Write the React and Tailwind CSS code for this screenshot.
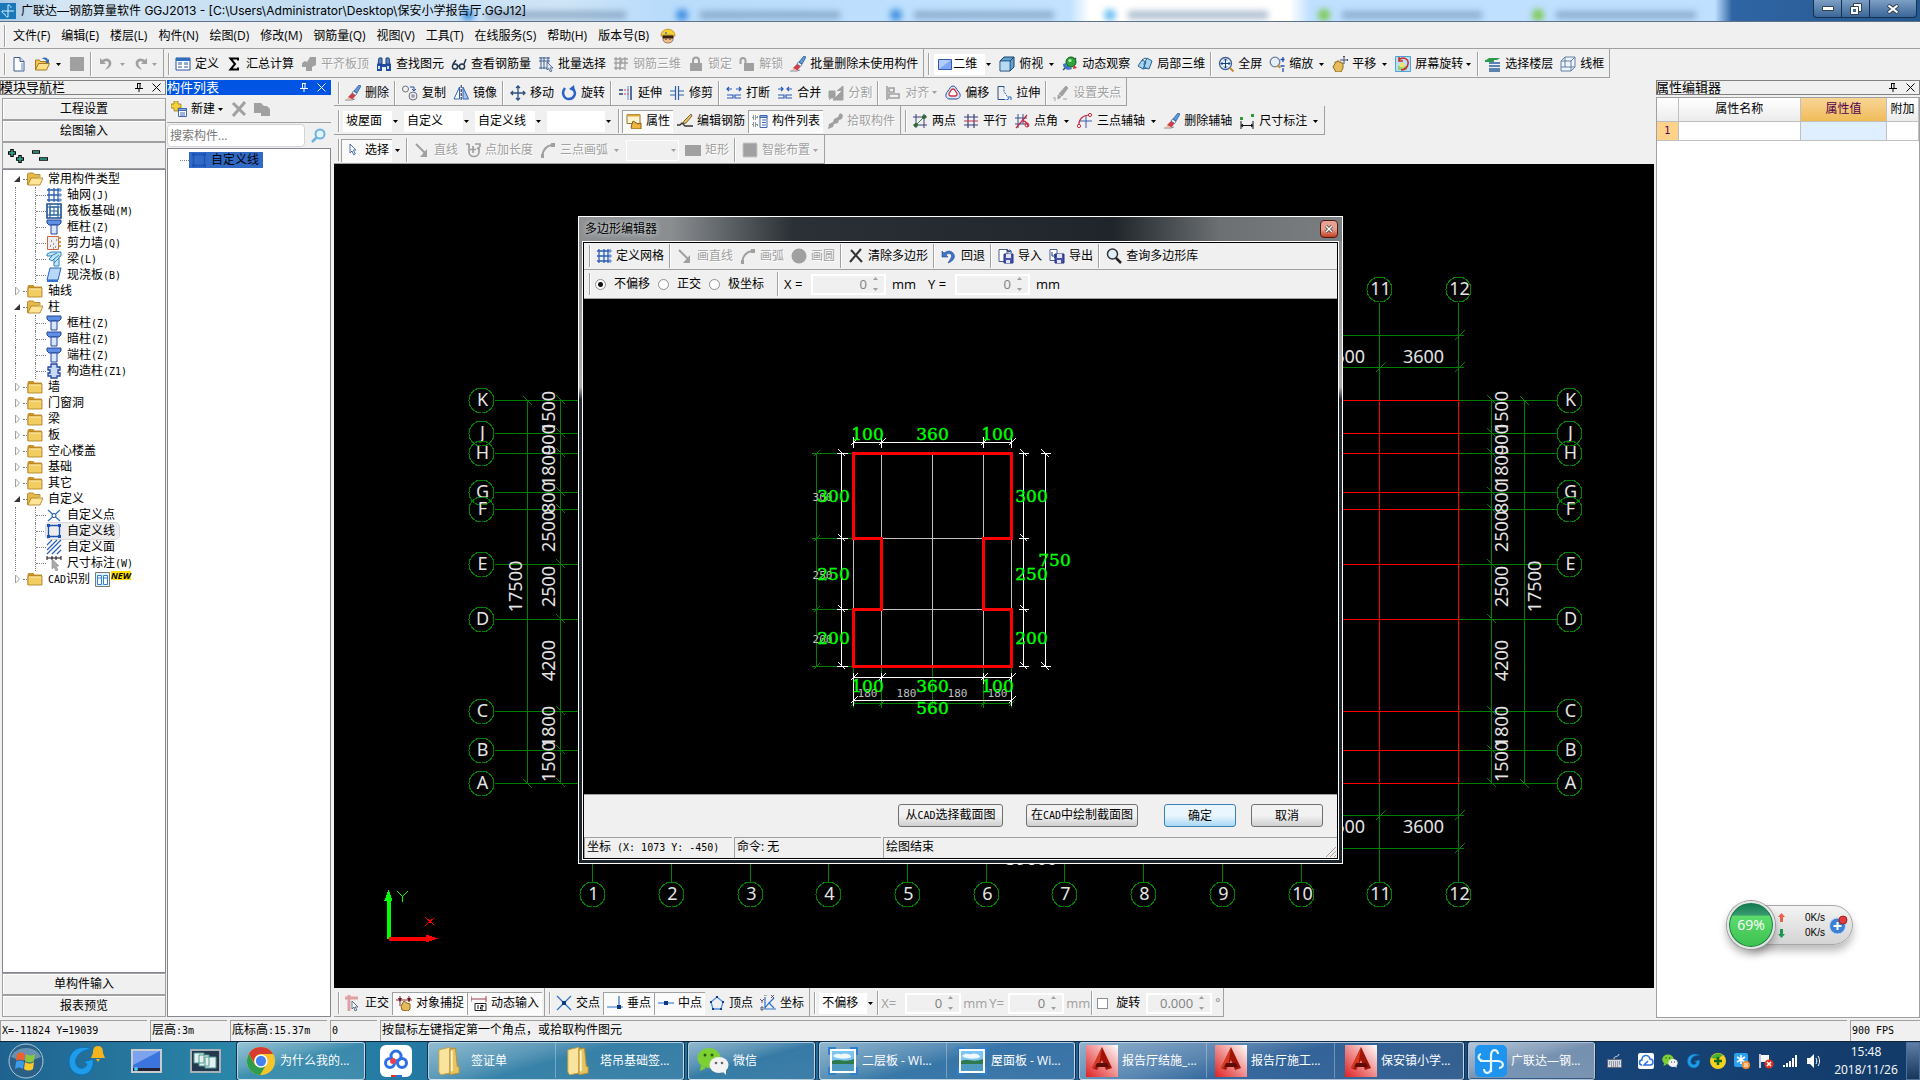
import { Fragment } from "react";

const G = "#a0a0a0";

/* 16x16 toolbar drawings */
const icons = {
  newFile: (
    <>
      <path d="M3 1.5h6l4 4v9.500H3z" fill="#fff" stroke="#3c5f94" />
      <path d="M9 1.500v4h4" fill="#c9daf2" stroke="#3c5f94" />
      <path d="M11 14V7" stroke="#a9c2e6" strokeWidth="2" />
    </>
  ),
  open: (
    <>
      <path d="M1.500 14V4h4l1 1.500h6V8" fill="#f2c65a" stroke="#a97a1c" />
      <path d="M1.500 14L4.500 7.500h11L12.500 14z" fill="#ffe08a" stroke="#a97a1c" />
      <path d="M8 3c2-2 5-2 6 1l1-1v4h-4l1.500-1.500C12 3.500 10 3 8 3z" fill="#2f6fc0" />
    </>
  ),
  save: <path d="M1 1h14v14H1z" fill={G} />,
  undoG: <path d="M2 2v6h6L6 6c3-2 6 0 4 4l-3 4c6-2 8-7 5-10C10 2 7 2 4 4z" fill={G} />,
  redoG: <path d="M14 2v6H8l2-2C7 4 4 6 6 10l3 4C3 12 1 7 4 4c2-2 5-2 8 0z" fill={G} />,
  define: (
    <>
      <path d="M1 2h14v12H1z" fill="#fff" stroke="#2a52a0" />
      <path d="M1 2h14v3H1z" fill="#2f6fc0" />
      <path d="M3 8h4M3 11h4M9 8h4M9 11h4" stroke="#2a52a0" />
      <path d="M3 6.500h4M9 6.500h4" stroke="#8fb2e6" />
    </>
  ),
  sigma: <path d="M12 4.500V2.500H4.500L9 8l-4.500 5.500H12v-2" fill="none" stroke="#000" strokeWidth="2" />,
  flatG: <path d="M1 7l3-2 2 1 3-5h6v8l-4 2v4H5v-4L1 11z" fill={G} />,
  find: (
    <>
      <path d="M1 8h5v7H1zM10 8h5v7h-5zM6 8h4v3H6z" fill="#1f4fa0" />
      <path d="M3 2h3v6H2zM10 2h3l1 6h-4z" fill="#5a86c8" stroke="#1f3f7a" />
      <path d="M2 10h2v3H2zM11 10h2v3h-2z" fill="#cfe0f8" />
    </>
  ),
  glasses: (
    <g fill="none" stroke="#223850" strokeWidth="1.500">
      <circle cx="4" cy="10.500" r="2.600" />
      <circle cx="11" cy="10.500" r="2.600" />
      <path d="M6.500 10h2M2 8l3-4M13 8l2-5" />
    </g>
  ),
  batch: (
    <>
      <path d="M1 2h11M1 5h11M3 1v12M6 1v12M1 12h8M10 1v6" stroke="#3c5f94" fill="none" />
      <path d="M9 6l6 6h-3l2 3-2 .5-1.500-3L9 14z" fill="#dce7f6" stroke="#33537f" strokeWidth=".8" />
    </>
  ),
  rebarG: <path d="M1 3h14M1 7h14M1 12h10M3 1v13M7 1v13M12 1v13M9 4l-3 9" stroke={G} strokeWidth="1.300" fill="none" />,
  lock: (
    <>
      <path d="M2 7h12v8H2z" fill={G} />
      <path d="M5 8V4.500a3 3 0 016 0V8" stroke={G} strokeWidth="2" fill="none" />
    </>
  ),
  unlock: (
    <>
      <path d="M5 7h10v8H5z" fill={G} />
      <path d="M1.500 8V4.500a2.500 2.500 0 015 0V8" stroke={G} strokeWidth="2" fill="none" />
    </>
  ),
  brush: (
    <>
      <path d="M0 15h7l3-1" stroke="#7a8ca8" fill="none" />
      <path d="M14 0l2 1-4 7-3-2z" fill="#5b9be0" stroke="#1f4f8a" strokeWidth=".7" />
      <path d="M8.500 6l3.500 2.500-1.500 2L7 8z" fill="#e6effa" stroke="#34507a" strokeWidth=".7" />
      <path d="M7 8l3.500 2.500-3 4L3 12z" fill="#c8404c" />
      <path d="M3 12l4 2.500-5 .5z" fill="#f0b090" />
    </>
  ),
  plane: (
    <>
      <path d="M1.500 3.500h13v10h-13z" fill="#7ea6f2" stroke="#3358b8" />
      <path d="M2 4h12L2 13z" fill="#b4ccfa" />
    </>
  ),
  cube: (
    <>
      <path d="M1 5l4-4h10v10l-4 4H1z" fill="#5fa2d6" stroke="#1f4060" />
      <path d="M1 5h10v10" fill="none" stroke="#1f4060" />
      <path d="M1.500 5.500h9v9h-9z" fill="#b7daf2" />
      <path d="M11 5l4-4" stroke="#1f4060" />
    </>
  ),
  orbit: (
    <>
      <path d="M1 14L14 2" stroke="#446" strokeWidth="1.500" />
      <circle cx="9" cy="6" r="5" fill="#2fa33c" stroke="#0d5c1a" />
      <circle cx="8" cy="4.500" r="1.600" fill="#b4f0b0" />
      <path d="M1 8c0 5 5 7 9 5l-1-2c-3 1-5-1-5-4z" fill="#3b76c8" />
      <path d="M12 9l3 3-4 1z" fill="#d03030" />
    </>
  ),
  part3d: (
    <>
      <path d="M1 10l4-6 4 2-3 7zM7 8l3-6 5 3-3 8-4-1z" fill="#a8d4f0" stroke="#22628e" />
      <path d="M5 4l3-2 2 1M6 13l4-1" stroke="#22628e" fill="none" />
    </>
  ),
  full: (
    <>
      <circle cx="7.500" cy="7.500" r="6" fill="#e8f2fc" stroke="#3f5f90" strokeWidth="1.300" />
      <path d="M7.500 3v9M3 7.500h9M6 4.500L7.500 3 9 4.500M6 10.500L7.500 12 9 10.500M4.500 6L3 7.500 4.500 9M10.500 6L12 7.500 10.500 9" stroke="#1a3f80" fill="none" />
      <path d="M12 12l3.500 3.500" stroke="#c98a2a" strokeWidth="2" />
    </>
  ),
  zoom: (
    <>
      <circle cx="6" cy="6" r="4.800" fill="#e4eefa" stroke="#6a7f9c" strokeWidth="1.300" />
      <path d="M9 9l2 3" stroke="#c98a2a" strokeWidth="2" />
      <path d="M14 1v5M11.500 3.500h4M11.500 10h4M14 12v4" stroke="#1a4fb0" strokeWidth="1.300" />
    </>
  ),
  pan: (
    <>
      <path d="M3 8V6h2V5h2v1h2v1h2v5l-2 4H4L1 11l1-2z" fill="#e6bd5c" stroke="#8f6a1e" />
      <path d="M12 0v8M8 4h8M11 1l1-1 1 1M15 3l1 1-1 1" stroke="#3c5070" fill="none" />
    </>
  ),
  rotScreen: (
    <>
      <path d="M.5.500h15v15H.500z" fill="#b7e0f4" stroke="#4fa2d4" />
      <path d="M3 10h9v4H3z" fill="#8fcf7c" />
      <circle cx="7" cy="9" r="2.500" fill="#f4e36a" />
      <path d="M4 4c4-4 10-1 9 4s-5 6-7 6M4 1v4h4" fill="none" stroke="#d02a2a" strokeWidth="1.500" />
    </>
  ),
  floors: (
    <>
      <path d="M4 2h11l-3 2H1z" fill="#2f9a4c" />
      <path d="M4 7h11M4 10h11M4 13h11M4 15h11" stroke="#2b5f9a" strokeWidth="1.500" />
      <path d="M0 5h9" stroke="#2f9a4c" strokeWidth="2" />
    </>
  ),
  wire: <path d="M1 5l4-4h10v10l-4 4H1zM1 5h10v10M11 5l4-4M5 1v10H1M5 11h10" fill="#eef4fa" stroke="#54749c" strokeWidth=".9" />,
  copy: (
    <>
      <circle cx="3.500" cy="4" r="3" fill="none" stroke="#6a6f78" />
      <circle cx="11" cy="11" r="4" fill="none" stroke="#6a6f78" />
      <circle cx="11" cy="11" r="2" fill="#9aa4b0" />
      <path d="M8 2h4v4M10 4l2 2 2-2" fill="none" stroke="#1f4fa0" />
    </>
  ),
  mirror: (
    <>
      <path d="M6.500 2v12H1z" fill="#fff" stroke="#2d62b8" />
      <path d="M10 2v12h5.500z" fill="#a8c4ec" stroke="#2d62b8" />
      <path d="M8.200 0v16" stroke="#223" strokeDasharray="3 1" />
    </>
  ),
  move: <path d="M8 1v14M1 8h14M6 3l2-2 2 2M6 13l2 2 2-2M3 6L1 8l2 2M13 6l2 2-2 2" stroke="#2c4f80" strokeWidth="1.300" fill="none" />,
  rotate: (
    <>
      <path d="M4 3C0 8 3 14 8 14s8-6 4-10" fill="none" stroke="#2a62c8" strokeWidth="2.500" />
      <path d="M13 0l1 7-6-3z" fill="#2a62c8" />
    </>
  ),
  extend: (
    <>
      <path d="M1 5h4M1 9h4M13 1v14" stroke="#24407c" strokeWidth="1.500" />
      <path d="M6 5h2M9 5h2M6 9h2M9 9h2" stroke="#d04050" />
      <path d="M10 1v14" stroke="#5f90d8" />
    </>
  ),
  trim: <path d="M6.500 1v14M9.500 1v14M1 6h5M10 6h5M1 10h5M10 10h5" stroke="#2d5fa8" strokeWidth="1.200" fill="none" />,
  breakI: <path d="M1 4h5M10 4h5M3 2L1 4l2 2M13 2l2 2-2 2M1 10h6v3H1M15 10H9v3h6" fill="none" stroke="#2758b8" strokeWidth="1.200" />,
  merge: <path d="M1 4h5M10 4h5M4 2l2 2-2 2M12 2l-2 2 2 2M1 10h6v3H1M15 10H9v3h6" fill="none" stroke="#2758b8" strokeWidth="1.200" />,
  splitG: <path d="M1 6h6v7H1zM9 6l6-5v14H5l9-9M3 13l-2 2" fill={G} stroke={G} />,
  alignG: <path d="M2 1v14M4 3h5v4H4zM4 9h10v4H4z" fill="none" stroke={G} strokeWidth="1.600" />,
  offset: (
    <>
      <path d="M8 1c3 0 3 3 5 5 4 4 2 8-2 8H5C1 14-1 10 3 6c2-2 2-5 5-5z" fill="#d8e6fa" stroke="#2b4f90" />
      <path d="M8 4c2 0 2 2 3 3 2 2 1 4-1 4H6c-2 0-3-2-1-4 1-1 1-3 3-3z" fill="#fff" stroke="#d0303c" strokeWidth="1.300" />
    </>
  ),
  stretch: (
    <>
      <path d="M8 1.500H2v13h6" fill="none" stroke="#2d4f80" />
      <path d="M8 1.500v5l5 8H8" fill="#fff" stroke="#1f62c0" strokeDasharray="2 1" />
      <path d="M12 12h3v3" stroke="#1f62c0" fill="none" />
    </>
  ),
  gripG: <path d="M13 1l2 2-6 8-3-2zM5 10l3 2-3 2zM0 13h3M10 14h4M1 15h2" fill={G} stroke={G} />,
  props: (
    <>
      <path d="M1 1.500h13v9H1z" fill="#fff4d0" stroke="#8a7430" />
      <path d="M1 1.500h13v2H1z" fill="#e0a83c" />
      <path d="M5 14l2-6 5 3 3-1v6H6z" fill="#f0b440" stroke="#8a6214" />
    </>
  ),
  editRebar: (
    <>
      <path d="M0 12h3l2-2 3 3h8" fill="none" stroke="#333" strokeWidth="1.300" />
      <path d="M14 1l1 2-6 7-3 1 1-3z" fill="#e8c060" stroke="#5f4a1a" strokeWidth=".8" />
    </>
  ),
  compList: (
    <>
      <path d="M8 2.500h7v12H8z" fill="#fff" stroke="#4068b0" />
      <path d="M8 2.500h7v2H8zM10 7h4M10 9.500h4M10 12h4" fill="#88aae0" stroke="#4068b0" />
      <path d="M1 3h3v3H1zM1 10h3v3H1zM5 4h2M5 12h2" fill="none" stroke="#234" strokeDasharray="1 1" />
    </>
  ),
  pickG: <path d="M13 0l3 2-1 4-3 1-1 3-4 1-1 3-5 2 1-5 4-2 1-3 4-2z" fill={G} />,
  twoPt: (
    <>
      <path d="M1 4h14M1 12h14M4 1v14M12 1v14" stroke="#3a3f78" fill="none" />
      <path d="M2 14L14 2" stroke="#2b8a3a" />
      <circle cx="12" cy="4" r="2" fill="#2b6a2a" />
      <circle cx="4" cy="12" r="2" fill="#2b6a2a" />
    </>
  ),
  parallel: (
    <>
      <path d="M1 4h14M1 12h14M5 1v14M11 1v14" stroke="#3a3f78" fill="none" strokeWidth="1.200" />
      <path d="M1 8h14" stroke="#c03048" />
    </>
  ),
  ptAngle: (
    <>
      <path d="M1 5h12M1 11h12M4 1v14M9 1v10" stroke="#3a4f90" fill="none" />
      <path d="M2 15L13 2M9 8c3 0 5 3 5 6" stroke="#c8283c" fill="none" strokeWidth="1.300" />
      <circle cx="13" cy="12" r="2" fill="none" stroke="#c8283c" />
    </>
  ),
  threePt: (
    <>
      <path d="M2 8h13M9 3v12" stroke="#3a5fb0" />
      <path d="M2 14C1 6 6 2 13 2" stroke="#c8283c" fill="none" strokeWidth="1.200" />
      <circle cx="13" cy="2" r="1.600" fill="#fff" stroke="#c8283c" />
      <circle cx="2" cy="13" r="1.600" fill="#fff" stroke="#c8283c" />
    </>
  ),
  dim: (
    <>
      <path d="M2 8v8M14 8v8M2 12.500h12M4 11l-2 1.500L4 14M12 11l2 1.500-2 1.500" stroke="#111" fill="none" />
      <path d="M1 4h3v3H1zM12 1h3v3h-3z" fill="#2f9a3c" />
    </>
  ),
  cursor: <path d="M5 2l6 6H8.500l1.800 4-1.600.8L7 9l-2 2z" fill="#fff" stroke="#4a6ea8" />,
  lineG: (
    <>
      <path d="M2 2l9 9" stroke={G} strokeWidth="2" />
      <path d="M13 7v8H6z" fill={G} />
    </>
  ),
  lenG: <path d="M4 2H1M4 2v8c0 6 10 6 10 0V5M14 5l-2 2M8 4v7M5 7.500h6M10 2h5v3" fill="none" stroke={G} strokeWidth="1.700" />,
  arcG: (
    <>
      <path d="M2 14C3 8 6 4 12 3" fill="none" stroke={G} strokeWidth="2" />
      <path d="M11 1h4v4h-4zM1 12h3v4H1z" fill={G} />
    </>
  ),
  rectG: <path d="M0 3h16v11H0z" fill={G} />,
  smartG: <path d="M1.500 1.500h13v13h-13z" fill={G} stroke={G} strokeWidth="2" strokeDasharray="1 1" />,
  ortho: (
    <>
      <path d="M0 3h13M4 0v16" stroke="#e0a0a0" strokeWidth="3" />
      <path d="M7 6l6 6h-3l2 3-2 1-1-4-2 2z" fill="#fff" stroke="#46658c" strokeWidth=".9" />
    </>
  ),
  snap: (
    <>
      <path d="M0 5h16M4 1v10M13 1v6" stroke="#a0202c" />
      <path d="M2 3l2 4 2-4zM11 3l2 4 2-4z" fill="#601820" />
      <path d="M6 15l-1-4 3-5 3 2 3 1v5l-2 2z" fill="#e4bb58" stroke="#8a681c" />
    </>
  ),
  dyn: (
    <>
      <path d="M0 4h15M0 1v6M15 1v6" stroke="#a04050" />
      <path d="M4 8.500h11v7H4z" fill="#fff" stroke="#222" />
      <path d="M7 10v4M9.500 10.500H12V12H9.500v2H12" stroke="#111" fill="none" />
    </>
  ),
  cross: (
    <>
      <path d="M1 1l14 14M15 1L1 15" stroke="#2b70c8" strokeWidth="1.200" />
      <path d="M6 6h4v4H6z" fill="#123a80" />
    </>
  ),
  perp: (
    <>
      <path d="M0 12h16M12 1v11" stroke="#2b70c8" strokeWidth="1.200" />
      <path d="M10 10h4v4h-4z" fill="#123a80" />
    </>
  ),
  mid: (
    <>
      <path d="M0 8h16" stroke="#5f9ae0" strokeWidth="1.500" />
      <path d="M6 6h4v4H6z" fill="#123a80" />
    </>
  ),
  vertex: (
    <>
      <path d="M8 2l6 5-2 7H4L2 7z" fill="none" stroke="#4f90e0" strokeWidth="1.300" />
      <path d="M7 1h2v2H7zM1 6h2v2H1zM13 6h2v2h-2zM3 13h2v2H3zM11 13h2v2h-2z" fill="#123a80" />
    </>
  ),
  coord: (
    <>
      <path d="M5 2v12h11M5 13l4-5 5 5M9 8l5-5" fill="none" stroke="#2b70c8" strokeWidth="1.200" />
      <path d="M4 0h3M0 4l2 2 2-2M2 6v2M11 0l3 3M14 0l-3 3M1 12h2v3H1z" stroke="#335" fill="none" strokeWidth=".8" />
    </>
  ),
  grid: (
    <>
      <path d="M1 3h13M1 8h13M1 13h13M3 1v14M8 1v14M12 1v14" stroke="#2b5fb8" strokeWidth="1.300" />
      <path d="M13 2h2v2h-2zM13 7h2v2h-2zM13 12h2v2h-2z" fill="#fff" stroke="#2b5fb8" strokeWidth=".8" />
    </>
  ),
  circG: <circle cx="8" cy="8" r="7.500" fill={G} />,
  clear: <path d="M3 2l11 12M13 1L2 14" stroke="#333" strokeWidth="2" />,
  undo: <path d="M1 3v6h6L5 7c3-3 7-1 5 3l-3 5c6-2 8-7 5-10S6 3 3 5z" fill="#3f74c8" stroke="#214a98" strokeWidth=".6" />,
  imp: (
    <>
      <path d="M1 1.500h8v12H1z" fill="#fff" stroke="#4a6090" />
      <path d="M6 6h9v9H6z" fill="#4a50b0" stroke="#25307c" />
      <path d="M8 6h5v4H8zM8 12h4v3H8z" fill="#dfe6fa" />
      <path d="M10 3c2-2 4 0 3 2M9 1l1 3 3-1" fill="none" stroke="#123a80" />
    </>
  ),
  exp: (
    <>
      <path d="M1 1.500h7v11H1z" fill="#fff" stroke="#4a6090" />
      <path d="M6 6h9v9H6z" fill="#4a50b0" stroke="#25307c" />
      <path d="M8 6h5v4H8zM8 12h4v3H8z" fill="#dfe6fa" />
      <path d="M3 4v4h4M5 6l2 2-2 2" fill="none" stroke="#123a80" />
    </>
  ),
  lens: (
    <>
      <circle cx="6.500" cy="6" r="5" fill="#dff0fa" stroke="#333" strokeWidth="1.500" />
      <path d="M10 10l5 5" stroke="#222" strokeWidth="2.500" />
    </>
  ),
  lensBlue: (
    <>
      <circle cx="10" cy="6" r="4.500" fill="#e4f3fc" stroke="#6cb4e4" strokeWidth="2" />
      <path d="M6.500 9.500L2 14" stroke="#6cb4e4" strokeWidth="2.500" />
    </>
  ),
  newComp: (
    <>
      <path d="M3 0h4v3h3v4H7v3H3V7H0V3h3z" fill="#f4d23c" stroke="#8a6c10" strokeWidth=".7" />
      <path d="M7.500 7.500h8v8h-8z" fill="#fff" stroke="#4068b0" />
      <path d="M7.500 7.500h8v2h-8zM9 12h5M9 14h5" fill="#88aae0" stroke="#4068b0" />
    </>
  ),
  delG: <path d="M2 2l12 12M14 1L2 15" stroke={G} strokeWidth="3" />,
  copyG: <path d="M0 2h7l3 3h3l3 3v7H7v-3H0z" fill={G} />,
  raft: (
    <>
      <path d="M1 1h14v14H1z" fill="#fff" stroke="#1f4f90" strokeWidth="1.600" />
      <path d="M4 4h8v8H4zM1 4h14M1 12h14M4 1v14M12 1v14M8 4v8M4 8h8" fill="none" stroke="#1f5f98" />
    </>
  ),
  column: (
    <>
      <path d="M1 1h14v3l-2 2H3L1 4z" fill="#5f8fe4" stroke="#24479a" />
      <path d="M5 6h6v9H5z" fill="#d8e6fc" stroke="#24479a" />
    </>
  ),
  wall: (
    <>
      <path d="M1.500 1.500h11v13h-11z" fill="#eee" stroke="#c8683c" />
      <path d="M4 11h1M7 9h1M9 12h1M5 6h1M10 5h1M7 13h1" stroke="#444" />
      <path d="M12 3h3M12 7h3M12 11h3" stroke="#d07020" strokeWidth="1.500" />
    </>
  ),
  beam: (
    <path d="M1 3l4-2h10v4l-2 1v9H8V8L6 10 3 8l3-3H1zM5 5l6-3M8 8l5-4M8 12l5-5" fill="#c4e4f8" stroke="#2b88c0" />
  ),
  slab: (
    <>
      <path d="M4 1h11l-3 12H1z" fill="#b8d8fa" stroke="#1f5fc0" />
      <path d="M1 13h11v2H1z" fill="#2f70d0" />
    </>
  ),
  structCol: (
    <path d="M5 1h6v3h3v3h-2v3h2v3h-3v2H5v-2H2v-3h2V7H2V4h3z" fill="#c8dcf8" stroke="#24479a" strokeWidth="1.300" />
  ),
  custPt: (
    <>
      <path d="M2 3l12 11M14 3L2 14" stroke="#2f70b8" strokeWidth="1.200" />
      <circle cx="8" cy="8.500" r="2" fill="#fff" stroke="#1f4f98" />
    </>
  ),
  custLine: (
    <>
      <path d="M2.500 2.500h11v11h-11z" fill="none" stroke="#1a52b8" strokeWidth="1.300" />
      <path d="M1 1h3v3H1zM12 1h3v3h-3zM1 12h3v3H1zM12 12h3v3h-3z" fill="#1a52b8" />
    </>
  ),
  custArea: <path d="M1 6l5-5M1 11L11 1M1 15L15 1M6 15l9-9M11 15l4-4" stroke="#2b60b8" strokeWidth="1.200" />,
  dimW: (
    <>
      <path d="M1 3h14M1 1v4M6 1v4M10 1v4M15 1v4" stroke="#111" />
      <path d="M6 4l7 7h-3l2 4-2 1-2-4-2 2z" fill="#aaa" stroke="#888" strokeWidth=".6" />
    </>
  ),
  folder: (
    <>
      <path d="M.500 3.500l1-1.500h5l1 1.500h7.500v10.500H.500z" fill="#c9932a" />
      <path d="M1 5h14v9H1z" fill="#f3cd62" stroke="#a8791c" strokeWidth=".8" />
      <path d="M2 6h12" stroke="#fdeeb0" />
    </>
  ),
  folderOpen: (
    <>
      <path d="M.500 14V3l1-1h5l1 1.500h5.500V6" fill="#e6bb4c" stroke="#a8791c" strokeWidth=".8" />
      <path d="M1 14l3-7h12l-3 7z" fill="#ffe394" stroke="#a8791c" strokeWidth=".8" />
    </>
  ),
};

const Icon = ({ name }) => (
  <svg width="16" height="16" viewBox="0 0 16 16" className="shrink-0">
    {icons[name]}
  </svg>
);

const Caret = ({ off }) => (
  <svg width="5" height="3" className="shrink-0">
    <path d="M0 0h5L2.500 3z" fill={off ? G : "#000"} />
  </svg>
);

/* Song-style text: half-width latin next to 12px han characters */
const Song = ({ children }) => (
  <>
    {children.split(/([\x20-\x7e]+)/).map((s, i) =>
      i % 2 ? (
        <span key={i} className="whitespace-pre font-['DejaVu_Sans_Mono',monospace] text-[10px]">
          {s}
        </span>
      ) : (
        s
      )
    )}
  </>
);

const Handle = () => (
  <span className="ml-1 mr-px h-[22px] w-[2px] shrink-0 border-l border-[#a0a0a0] bg-white" />
);

const Sep = () => (
  <span className="mx-[2px] h-6 w-[2px] shrink-0 self-center border-l border-[#a0a0a0] bg-white" />
);

const Group = ({ children }) => (
  <div className="flex h-full shrink-0 items-center border-r border-b border-[#a0a0a0] pt-[2px] pr-[2px]">
    <Handle />
    {children}
  </div>
);

const Tool = ({ icon, text, off, on, arrow, label }) => (
  <>
    <button
      disabled={off}
      aria-label={text || label}
      className={
        "flex h-[23px] shrink-0 items-center gap-1 whitespace-nowrap pl-1 pr-[3px] " +
        (off ? "text-[#a0a0a0] [text-shadow:1px_1px_#fff] " : "") +
        (on
          ? "bg-[#fafafa] shadow-[inset_1px_1px_#a0a0a0,inset_-1px_-1px_#fff]"
          : "")
      }
    >
      <Icon name={icon} />
      {text}
    </button>
    {arrow && (
      <span className={arrow === "tight" ? "flex w-[9px]" : "flex w-3 pl-[3px]"}>
        <Caret off={off} />
      </span>
    )}
  </>
);

const tools = (list) =>
  list.map((t, i) =>
    t === "|" ? <Sep key={i} /> : <Tool key={i} icon={t[0]} text={t[1]} {...t[2]} />
  );

const Combo = ({ value, label, className, off, icon }) => (
  <span
    className={
      "flex h-[21px] shrink-0 items-center pl-[3px] " +
      (off ? "border border-white " : "bg-white ") +
      className
    }
  >
    {icon && <Icon name={icon} />}
    <select
      aria-label={label}
      disabled={off}
      className="h-full min-w-0 flex-1 appearance-none bg-transparent outline-none"
    >
      <option>{value}</option>
    </select>
    <span className="flex h-full w-2 items-center bg-[#f0f0f0] pl-px">
      <Caret off={off} />
    </span>
  </span>
);

const Spin = ({ value, label, className }) => (
  <span className={"flex h-[21px] shrink-0 items-center border-2 border-white " + className}>
    <input
      aria-label={label}
      disabled
      defaultValue={value}
      className="min-w-0 flex-1 bg-transparent text-right text-[13px] text-[#808080]"
    />
    <svg width="17" height="16">
      <path d="M6 4h5L8.500 1zM6 12h5l-2.500 3z" fill="#a0a0a0" />
    </svg>
  </span>
);

const menus = [
  "文件(F)", "编辑(E)", "楼层(L)", "构件(N)", "绘图(D)", "修改(M)", "钢筋量(Q)",
  "视图(V)", "工具(T)", "在线服务(S)", "帮助(H)", "版本号(B)",
];

const off = { off: true };

const fileTools = [
  ["newFile", "", { label: "新建" }],
  ["open", "", { label: "打开", arrow: true }],
  ["save", "", { label: "保存", off: true }],
  "|",
  ["undoG", "", { label: "撤销", off: true, arrow: true }],
  ["redoG", "", { label: "恢复", off: true, arrow: "tight" }],
];
const rebarTools = [
  ["define", "定义"],
  ["sigma", "汇总计算"],
  ["flatG", "平齐板顶", off],
  ["find", "查找图元"],
  ["glasses", "查看钢筋量"],
  ["batch", "批量选择"],
  ["rebarG", "钢筋三维", off],
  ["lock", "锁定", off],
  ["unlock", "解锁", off],
  ["brush", "批量删除未使用构件"],
];
const viewTools = [
  ["cube", "俯视", { arrow: true }],
  ["orbit", "动态观察"],
  ["part3d", "局部三维"],
  "|",
  ["full", "全屏"],
  ["zoom", "缩放", { arrow: true }],
  ["pan", "平移", { arrow: true }],
  ["rotScreen", "屏幕旋转", { arrow: "tight" }],
  "|",
  ["floors", "选择楼层"],
  ["wire", "线框"],
];
const editTools = [
  ["brush", "删除"],
  "|",
  ["copy", "复制"],
  ["mirror", "镜像"],
  "|",
  ["move", "移动"],
  ["rotate", "旋转"],
  "|",
  ["extend", "延伸"],
  ["trim", "修剪"],
  "|",
  ["breakI", "打断"],
  ["merge", "合并"],
  ["splitG", "分割", off],
  "|",
  ["alignG", "对齐", { off: true, arrow: "tight" }],
  ["offset", "偏移"],
  ["stretch", "拉伸"],
  "|",
  ["gripG", "设置夹点", off],
];
const compTools = [
  ["props", "属性", { on: true }],
  ["editRebar", "编辑钢筋"],
  ["compList", "构件列表", { on: true }],
  ["pickG", "拾取构件", off],
];
const axisTools = [
  ["twoPt", "两点"],
  ["parallel", "平行"],
  ["ptAngle", "点角", { arrow: true }],
  ["threePt", "三点辅轴", { arrow: true }],
  ["brush", "删除辅轴"],
  ["dim", "尺寸标注", { arrow: true }],
];
const drawTools = [
  ["cursor", "选择", { on: true, arrow: true }],
  "|",
  ["lineG", "直线", off],
  ["lenG", "点加长度", off],
  ["arcG", "三点画弧", { off: true, arrow: true }],
];
const snapTools = [
  ["cross", "交点"],
  ["perp", "垂点", { on: true }],
  ["mid", "中点", { on: true }],
  ["vertex", "顶点"],
  ["coord", "坐标"],
];
const polyTools = [
  ["grid", "定义网格"],
  "|",
  ["lineG", "画直线", off],
  ["arcG", "画弧", off],
  ["circG", "画圆", off],
  "|",
  ["clear", "清除多边形"],
  "|",
  ["undo", "回退"],
  "|",
  ["imp", "导入"],
  ["exp", "导出"],
  "|",
  ["lens", "查询多边形库"],
];

const tree = [
  {
    text: "常用构件类型",
    items: [
      ["grid", "轴网(J)"],
      ["raft", "筏板基础(M)"],
      ["column", "框柱(Z)"],
      ["wall", "剪力墙(Q)"],
      ["beam", "梁(L)"],
      ["slab", "现浇板(B)"],
    ],
  },
  { text: "轴线" },
  {
    text: "柱",
    items: [
      ["column", "框柱(Z)"],
      ["column", "暗柱(Z)"],
      ["column", "端柱(Z)"],
      ["structCol", "构造柱(Z1)"],
    ],
  },
  { text: "墙" },
  { text: "门窗洞" },
  { text: "梁" },
  { text: "板" },
  { text: "空心楼盖" },
  { text: "基础" },
  { text: "其它" },
  {
    text: "自定义",
    items: [
      ["custPt", "自定义点"],
      ["custLine", "自定义线", true],
      ["custArea", "自定义面"],
      ["dimW", "尺寸标注(W)"],
    ],
  },
  { text: "CAD识别", isNew: true },
];

const TitleBar = () => (
  <header className="relative flex h-[22px] shrink-0 items-center overflow-hidden border-b border-[#5f7388] bg-[linear-gradient(90deg,#a9c9e4_0px,#d4e6f4_60px,#c3ddf2_300px,#cfe4f6_560px,#b9dcfb_660px,#c2e2ff_1070px,#ffffff_1090px,#ffffff_1290px,#bfe0ff_1310px,#bfe0ff_1715px,#2f65a4_1732px,#25588f_1920px)]">
    <div className="absolute inset-0 flex gap-[151px] pl-[462px] blur-[3px]">
      {["#3d8fe0", "#3d8fe0", "#3d8fe0", "#6cc0f0", "#7cc850", "#7cc850"].map((c, i) => (
        <span key={i} className="mt-[9px] flex w-[63px] shrink-0 items-center gap-3">
          <i className="size-3 shrink-0 rounded-full" style={{ background: c }} />
          <i className="h-2 w-[140px] shrink-0 bg-[#5b7da0]/50" />
        </span>
      ))}
    </div>
    <svg viewBox="0 0 16 16" className="relative size-4">
      <path d="M0 0h16v16H0z" fill="#1b78b8" />
      <path d="M8 2v12M2 8h12M8 2c3 0 3 3 3 3M8 14c-3 0-3-3-3-3M2 8c0 3 3 3 3 3" stroke="#d4f0ff" fill="none" />
    </svg>
    <h1 className="relative ml-[5px] font-['Inter','Noto_Sans_CJK_SC',sans-serif] whitespace-nowrap">
      广联达—钢筋算量软件 GGJ2013 - [C:\Users\Administrator\Desktop\保安小学报告厅.GGJ12]
    </h1>
    <div className="relative mr-[3px] ml-auto flex h-[18px] self-start overflow-hidden rounded-b border border-t-0 border-[#16304f] bg-gradient-to-b from-[#7d9fc4] to-[#3a6698]">
      <button aria-label="最小化" className="flex w-7 items-center justify-center border-r border-[#16304f]">
        <svg width="12" height="6">
          <path d="M.500.500h11v4H.500z" fill="#fff" stroke="#345" />
        </svg>
      </button>
      <button aria-label="还原" className="flex w-7 items-center justify-center border-r border-[#16304f]">
        <svg width="12" height="12">
          <path d="M3.500.500h8v8h-8z" fill="#fff" stroke="#345" />
          <path d="M.500 3.500h8v8h-8z" fill="#fff" stroke="#345" />
          <path d="M3 6h3v3H3z" fill="#3a6698" />
        </svg>
      </button>
      <button aria-label="关闭" className="flex w-[46px] items-center justify-center">
        <svg width="12" height="10">
          <path d="M1 1l10 8M11 1L1 9" stroke="#345" strokeWidth="4" />
          <path d="M1.500 1.500l9 7M10.500 1.500l-9 7" stroke="#fff" strokeWidth="2.200" />
        </svg>
      </button>
    </div>
  </header>
);

const PanelTitle = ({ text, active }) => (
  <div
    className={
      "flex h-[15px] shrink-0 items-center border text-[13px] leading-[13px] " +
      (active
        ? "border-[#0054e3] bg-[#0054e3] text-white"
        : "border-[#808080] bg-[#f0f0f0]")
    }
  >
    <h2 className="-ml-px flex-1 whitespace-nowrap">{text}</h2>
    <svg width="8" height="9" className="mr-[9px]" aria-hidden>
      <path d="M2.500 0v5M5 0v5M0 5.500h8M4 6v3M2 .500h4" stroke="currentColor" fill="none" />
    </svg>
    <svg width="9" height="9" className="mr-1" aria-hidden>
      <path d="M.500.500l8 8M8.500.500l-8 8" stroke="currentColor" />
    </svg>
  </div>
);

const NavButton = ({ children }) => (
  <button className="h-[22px] shrink-0 border border-[#a0a0a0] bg-[#f0f0f0] shadow-[inset_1px_1px_#fff]">
    {children}
  </button>
);

const NavTree = () => (
  <ul className="min-h-0 flex-1 overflow-hidden border border-[#828790] bg-white pt-px">
    {tree.map((node) => (
      <li key={node.text}>
        <div className="flex h-4 items-center pl-[10px]">
          <svg width="10" height="10" className="shrink-0">
            {node.items ? (
              <path d="M7 2v6H1z" fill="#333" />
            ) : (
              <path d="M2.500 1v8L6.500 5z" fill="#fff" stroke="#a0a0a0" />
            )}
          </svg>
          <span className="w-1 shrink-0 border-t border-dotted border-[#808080]" />
          <Icon name={node.items ? "folderOpen" : "folder"} />
          <span className="ml-[5px] whitespace-nowrap">
            <Song>{node.text}</Song>
          </span>
          {node.isNew && (
            <>
              <svg width="15" height="15" className="ml-[5px] shrink-0">
                <path d="M.500.500h14v14H.500z" fill="#e4f0fa" stroke="#777" />
                <path d="M2.500 3.500h4v9h-4zM8.500 3.500h4v9h-4zM3 6h3M9 6h3" fill="#fff" stroke="#2f80d0" />
              </svg>
              <b className="ml-px self-start bg-[#ffe000] text-[9px] leading-[9px] italic">NEW</b>
            </>
          )}
        </div>
        {node.items && (
          <ul>
            {node.items.map(([icon, text, hot]) => (
              <li key={text} className="flex h-4 items-center pl-3">
                <span className="h-4 w-5 shrink-0 border-l border-dotted border-[#808080]" />
                <span className="flex h-4 w-[11px] shrink-0 items-center border-l border-dotted border-[#808080]">
                  <span className="w-full border-t border-dotted border-[#808080]" />
                </span>
                <span
                  className={
                    "flex items-center gap-[5px] whitespace-nowrap " +
                    (hot ? "rounded-sm bg-[#ededed] pr-1 outline outline-[#d8d8d8]" : "")
                  }
                >
                  <Icon name={icon} />
                  <span>
                    <Song>{text}</Song>
                  </span>
                </span>
              </li>
            ))}
          </ul>
        )}
      </li>
    ))}
  </ul>
);

/* axis grid of the model view */
const rows = [
  ["K", 400], ["J", 433], ["H", 453], ["G", 492], ["F", 509],
  ["E", 564], ["D", 619], ["C", 711], ["B", 750], ["A", 783],
];
const rowDims = [
  ["1500", 411], ["900", 439], ["1800", 465], ["800", 497], ["2500", 531],
  ["2500", 586], ["4200", 660], ["1800", 726], ["1500", 761],
];
const cols = [592, 671, 750, 828, 907, 986, 1064, 1143, 1222, 1301, 1379, 1458];

const Bubble = ({ x, y, text }) => (
  <>
    <circle cx={x} cy={y} r="12.500" fill="none" stroke="#008000" shapeRendering="crispEdges" />
    <text x={x + 1} y={y + 5} textAnchor="middle">
      {text}
    </text>
  </>
);

const VText = ({ x, y, text }) => (
  <text transform={`translate(${x} ${y}) rotate(-90)`} textAnchor="middle">
    {text}
  </text>
);

const ModelView = () => (
  <svg className="block h-full w-full font-['Noto_Sans',sans-serif] text-[18px]" fill="#e4e4e4">
    <g transform="translate(-333.5 -163.5)">
      <g stroke="#008000" fill="none" shapeRendering="crispEdges">
        {rows.map(([r, y]) => (
          <path
            key={r}
            d={`M494 ${y}H580M556 ${y - 5}l9 9M1340 ${y}H1557M1487 ${y - 5}l9 9`}
          />
        ))}
        <path d="M527 400V783M560 400V783M1491 400V783M1524 400V783" />
        <path d="M523 396l9 9M523 779l9 9M1520 396l9 9M1520 779l9 9" />
        <path d="M1340 335H1463M1340 367H1463M1340 815H1463M1340 848H1463" />
        <path d="M1454 340l10-10M1454 372l10-10M1375 372l10-10M1454 820l10-10M1375 820l10-10M1454 853l10-10" />
        {cols.map((x) => (
          <path key={x} d={`M${x} 302V400M${x} 783V881`} />
        ))}
      </g>
      <g stroke="#f00" fill="none" shapeRendering="crispEdges">
        {rows.map(([r, y]) => (
          <path key={r} d={`M1340 ${y}H1458`} />
        ))}
        <path d="M1379 400V783M1458 400V783" />
      </g>
      {rows.map(([r, y]) => (
        <Fragment key={r}>
          <Bubble x={481} y={y} text={r} />
          <Bubble x={1569} y={y} text={r} />
        </Fragment>
      ))}
      {cols.map((x, i) => (
        <Fragment key={x}>
          <Bubble x={x} y={894} text={i + 1} />
          <Bubble x={x} y={289} text={i + 1} />
        </Fragment>
      ))}
      {rowDims.map(([t, y]) => (
        <Fragment key={y}>
          <VText x={554} y={y} text={t} />
          <VText x={1507} y={y} text={t} />
        </Fragment>
      ))}
      <VText x={521} y={586} text="17500" />
      <VText x={1540} y={586} text="17500" />
      <g textAnchor="middle">
        <text x="1423" y="362">3600</text>
        <text x="1344" y="362">3600</text>
        <text x="1423" y="832">3600</text>
        <text x="1344" y="832">3600</text>
        <text x="1031" y="864">39600</text>
      </g>
      <g shapeRendering="crispEdges">
        <path d="M386 938V900h4v38zM384 900l4-11 4 11z" fill="#0f0" />
        <path d="M388 936h37v4h-37zM425 934l12 4-12 4z" fill="#f00" />
        <path d="M397 891l5 5 5-5M402 896v5" stroke="#0f0" fill="none" />
        <path d="M425 917l9 8M434 917l-9 8" stroke="#f00" fill="none" />
      </g>
    </g>
  </svg>
);

const yCuts = [453, 538, 609, 666];
const xCuts = [853, 881, 983, 1011];

const SectionView = () => (
  <svg className="block min-h-0 w-full flex-1 bg-black">
    <g transform="translate(-583.5 -298.5)">
      <g fill="none" shapeRendering="crispEdges">
        <g stroke="#008000">
          <path d="M816 453V666M853 703H1011" />
          {yCuts.map((y) => (
            <path key={y} d={`M811 ${y}H853M813 ${y + 3}l6-6`} />
          ))}
          {[...xCuts, 932].map((x) => (
            <path key={x} d={`M${x} 666V707M${x - 3} 706l6-6`} />
          ))}
        </g>
        <path
          d="M853 453H1011V666H853zM881 453V666M932 453V666M983 453V666M853 538H1011M853 609H1011"
          stroke="#c0c0c0"
        />
        <g stroke="#fff">
          <path d="M853 442H1011M853 677H1011M853 700H1011M841 453V666M1023 453V666M1045 453V666" />
          {xCuts.map((x) => (
            <path key={x} d={`M${x} 436V447M${x - 3} 445l7-7M${x} 672V683M${x - 3} 680l7-7`} />
          ))}
          {yCuts.map((y) => (
            <path
              key={y}
              d={`M836 ${y}H847M838 ${y - 4}l7 7M1018 ${y}H1028M1020 ${y - 4}l7 7`}
            />
          ))}
          <path d="M1040 453H1050M1041 449l8 8M1040 666H1050M1041 662l8 8" />
          <path d="M853 683V705M850 703l7-7M1011 683V705M1008 703l7-7" />
        </g>
        <path
          d="M853 453H1011V538H983V609H1011V666H853V609H881V538H853z"
          stroke="#f00"
          strokeWidth="3"
        />
      </g>
      <g className="font-['DejaVu_Sans_Mono',monospace] text-[11px]" fill="#c0c0c0" textAnchor="middle">
        <text x="822" y="500">300</text>
        <text x="822" y="578">250</text>
        <text x="822" y="642">200</text>
        <text x="867" y="696">180</text>
        <text x="906" y="696">180</text>
        <text x="957" y="696">180</text>
        <text x="997" y="696">180</text>
      </g>
      <g className="font-['DejaVu_Serif',serif] text-[17px]" fill="#0f0" stroke="#0f0" strokeWidth=".4" textAnchor="middle">
        {[439, 691].map((y) => (
          <Fragment key={y}>
            <text x="867" y={y}>100</text>
            <text x="932" y={y}>360</text>
            <text x="997" y={y}>100</text>
          </Fragment>
        ))}
        {[833, 1031].map((x) => (
          <Fragment key={x}>
            <text x={x} y="501">300</text>
            <text x={x} y="579">250</text>
            <text x={x} y="643">200</text>
          </Fragment>
        ))}
        <text x="1054" y="565">750</text>
        <text x="932" y="713">560</text>
      </g>
    </g>
  </svg>
);

const DialogButton = ({ children, className, primary }) => (
  <button
    className={
      "h-[23px] rounded-[3px] border bg-gradient-to-b " +
      (primary
        ? "border-[#3c7fb1] from-[#eaf6fd] from-50% to-[#a7d9f5] "
        : "border-[#707070] from-[#f2f2f2] from-50% to-[#cfcfcf] ") +
      className
    }
  >
    <Song>{children}</Song>
  </button>
);

const PolygonDialog = () => (
  <section
    role="dialog"
    aria-label="多边形编辑器"
    className="absolute top-[52px] left-[244px] flex h-[648px] w-[765px] flex-col border border-white bg-[linear-gradient(180deg,#85898c_0px,#a9adaf_170px,#262e35_182px,#1d252c_100%)] px-[3px] pb-[3px]"
  >
    <div className="-mx-[3px] flex h-6 shrink-0 items-center bg-[linear-gradient(90deg,#8c9093_0%,#8a8e91_12%,#2a3035_28%,#1f252a_70%,#6c7073_84%,#7b7f82_100%)] pr-1 pl-[6px]">
      <h2 className="flex-1 [text-shadow:0_0_6px_#fff]">多边形编辑器</h2>
      <button
        aria-label="关闭"
        className="flex h-[18px] w-[18px] items-center justify-center rounded-sm border border-[#4a1a14] bg-gradient-to-b from-[#e8a090] from-50% to-[#c23a1c]"
      >
        <svg width="8" height="8">
          <path d="M1 1l6 6M7 1L1 7" stroke="#433" strokeWidth="3" />
          <path d="M1 1l6 6M7 1L1 7" stroke="#fff" strokeWidth="1.500" />
        </svg>
      </button>
    </div>
    <div className="flex min-h-0 flex-1 flex-col border border-white bg-black p-px">
      <div className="flex h-[27px] shrink-0 items-center border-b border-[#a0a0a0] bg-[#f0f0f0] pl-px">
        <Handle />
        {tools(polyTools)}
      </div>
      <div className="flex h-[29px] shrink-0 items-center border-b border-[#a0a0a0] bg-[#f0f0f0] pl-px">
        <Handle />
        <div className="flex gap-[5px]">
          {["不偏移", "正交", "极坐标"].map((t, i) => (
            <label key={t} className="flex items-center gap-2 pl-[3px]">
              <input
                type="radio"
                name="offset"
                defaultChecked={i === 0}
                className="size-[11px] appearance-none rounded-full border border-[#8e8f8f] bg-white checked:bg-[radial-gradient(#111_0_2px,#fff_3px)]"
              />
              {t}
            </label>
          ))}
        </div>
        <span className="w-[11px]" />
        <Sep />
        <span className="w-[30px] pl-[3px] text-[13px] whitespace-nowrap">X =</span>
        <Spin label="X" value="0" className="w-[75px]" />
        <span className="w-[42px] pl-[6px] text-[13px]">mm</span>
        <span className="w-[27px] text-[13px] whitespace-nowrap">Y =</span>
        <Spin label="Y" value="0" className="w-[75px]" />
        <span className="pl-[6px] text-[13px]">mm</span>
      </div>
      <SectionView />
      <div className="flex h-[43px] shrink-0 items-center justify-end border-t border-[#a0a0a0] bg-[#f0f0f0] pr-[14px] pb-px">
        <DialogButton className="mr-[23px] w-[105px]">从CAD选择截面图</DialogButton>
        <DialogButton className="mr-[26px] w-[112px]">在CAD中绘制截面图</DialogButton>
        <DialogButton primary className="mr-[15px] w-[72px]">确定</DialogButton>
        <DialogButton className="w-[72px]">取消</DialogButton>
      </div>
      <div className="flex h-[21px] shrink-0 items-stretch gap-[2px] bg-[#f0f0f0] leading-[18px]">
        <span className="w-[148px] border-t border-l border-[#a0a0a0] pl-[2px]">
          <Song>坐标 (X: 1073 Y: -450)</Song>
        </span>
        <span className="w-[147px] border-t border-l border-[#a0a0a0] pl-[2px]">命令: 无</span>
        <span className="flex flex-1 items-end border-t border-l border-[#a0a0a0] pl-[2px]">
          <span className="flex-1 self-start">绘图结束</span>
          <svg width="12" height="12">
            <path d="M1 11L11 1M5 11l6-6M9 11l2-2" stroke="#a0a0a0" />
          </svg>
        </span>
      </div>
    </div>
  </section>
);

const PropertyPanel = () => (
  <aside className="flex w-[264px] shrink-0 flex-col pt-[2px] pb-px">
    <PanelTitle text="属性编辑器" />
    <div className="mt-[2px] flex-1 border border-[#a0a0a0] bg-white">
      <table className="w-full table-fixed border-collapse">
        <colgroup>
          <col className="w-[21px]" />
          <col />
          <col className="w-[86px]" />
          <col className="w-[32px]" />
        </colgroup>
        <thead>
          <tr className="h-[23px] bg-gradient-to-b from-white to-[#ececec]">
            <th className="border-r border-b border-[#c0c0c0]" />
            <th className="border-r border-b border-[#c0c0c0] font-normal">属性名称</th>
            <th className="border-r border-b border-[#c0c0c0] bg-gradient-to-b from-[#f8d494] to-[#f0bc58] font-normal text-[#500050]">
              属性值
            </th>
            <th className="border-r border-b border-[#c0c0c0] font-normal whitespace-nowrap">附加</th>
          </tr>
        </thead>
        <tbody>
          <tr className="h-[19px]">
            <td className="border-r border-b border-[#c0c0c0] bg-[#ffd28c] text-center text-[#500050]">
              <Song>1</Song>
            </td>
            <td className="border-r border-b border-[#c0c0c0]" />
            <td className="border-r border-b border-[#c0c0c0] bg-[#e0efff]" />
            <td className="border-r border-b border-[#c0c0c0]" />
          </tr>
        </tbody>
      </table>
    </div>
  </aside>
);

const NetWidget = () => (
  <div className="absolute right-[67px] bottom-[132px] flex h-[46px] w-[126px] items-center">
    <div className="absolute inset-y-[3px] right-0 left-6 flex items-center rounded-r-full border border-[#a8a8a8] bg-gradient-to-b from-[#f4f4f4] to-[#d4d4d4] pl-[26px] shadow-[0_6px_8px_#0004]">
      <div className="flex flex-col gap-[7px]">
        <svg width="7" height="9">
          <path d="M3.500 0L7 4H5v5H2V4H0z" fill="#f06048" />
        </svg>
        <svg width="7" height="9">
          <path d="M3.500 9L7 5H5V0H2v5H0z" fill="#1f9a50" />
        </svg>
      </div>
      <div className="ml-5 font-['Liberation_Sans',sans-serif] text-[10px] leading-[15px]">
        <p>0K/s</p>
        <p>0K/s</p>
      </div>
      <svg width="19" height="20" className="ml-1">
        <circle cx="8.500" cy="11" r="8" fill="#3a80d8" stroke="#c8d8ee" />
        <path d="M8.500 7v8M4.500 11h8" stroke="#fff" strokeWidth="2" />
        <circle cx="14" cy="5" r="4" fill="#e03c3c" stroke="#b02020" />
      </svg>
    </div>
    <div className="relative flex size-12 shrink-0 items-center justify-center rounded-full border-2 border-[#e4e4e4] bg-[linear-gradient(180deg,#0f7a50_0%,#3a9a70_28%,#5cdc6c_29%,#3cc050_100%)] text-sm text-white shadow-[0_0_0_1px_#999,inset_0_0_0_1px_#157a48,0_5px_8px_#0005]">
      69%
    </div>
  </div>
);

const ChromeIcon = () => (
  <svg viewBox="0 0 32 32" className="size-[30px] shrink-0">
    <circle cx="16" cy="16" r="15" fill="#f5c52c" />
    <path d="M3 8.500A15 15 0 0129 8.500H16a7.500 7.500 0 00-7 10z" fill="#d83c30" />
    <path d="M3 8.500a15 15 0 0012 22.500l6.500-11A7.500 7.500 0 019 19z" fill="#2f9e4c" />
    <circle cx="16" cy="16" r="7" fill="#fff" />
    <circle cx="16" cy="16" r="5.500" fill="#4584f0" />
  </svg>
);

const FolderBig = () => (
  <svg viewBox="0 0 26 32" className="h-[30px] w-6 shrink-0">
    <path d="M2 4l12-3v28L4 31 2 28z" fill="#f8e49c" stroke="#c8a040" />
    <path d="M14 3l6-1 2 20h2v7l-10 2z" fill="#e8c460" stroke="#b88c30" />
    <path d="M16 5v22" stroke="#fff6d0" strokeWidth="2" />
  </svg>
);

const WeChat = ({ className }) => (
  <svg viewBox="0 0 32 28" className={className}>
    <ellipse cx="12" cy="11" rx="11.500" ry="10" fill="#7cd034" />
    <path d="M4 18l-1 6 6-3z" fill="#7cd034" />
    <ellipse cx="22" cy="18" rx="9.500" ry="8" fill="#f2f2f2" />
    <path d="M25 24l4 4 0-6z" fill="#f2f2f2" />
    <circle cx="8" cy="8" r="1.500" fill="#2c5a10" />
    <circle cx="15" cy="8" r="1.500" fill="#2c5a10" />
    <circle cx="19" cy="16" r="1.300" fill="#666" />
    <circle cx="25" cy="16" r="1.300" fill="#666" />
  </svg>
);

const PhotoIcon = () => (
  <svg viewBox="0 0 30 28" className="h-7 w-[30px] shrink-0">
    <path d="M0 0h8v8H0zM22 0h8v8h-8zM0 20h8v8H0zM22 20h8v8h-8z" fill="#2f80d0" />
    <path d="M2 2h26v24H2z" fill="#fff" />
    <path d="M4 4h22v20H4z" fill="#7cc4f4" />
    <path d="M5 9c4-4 7-1 9-2s7-1 9 2-14 4-18 0z" fill="#eef8ff" />
    <path d="M4 14c6-3 12 2 22-2v5H4z" fill="#2f7a4c" />
    <path d="M4 17h22v7H4z" fill="#4f9ac0" />
  </svg>
);

const AcadIcon = () => (
  <svg viewBox="0 0 32 32" className="size-8 shrink-0">
    <defs>
      <linearGradient id="acad" x1="0" y1="1" x2="1" y2="0">
        <stop offset="0" stopColor="#e02020" />
        <stop offset="1" stopColor="#fff" />
      </linearGradient>
    </defs>
    <path d="M0 0h32v32H0z" fill="url(#acad)" />
    <path d="M16 2l10 21-6 2-4-10-5 10-5-2z" fill="#a01408" />
    <path d="M16 2l-3 20-7 1z" fill="#d83a20" />
    <path d="M11 18h10l2 4H9z" fill="#5c0c04" />
  </svg>
);

const GlodonIcon = () => (
  <svg viewBox="0 0 32 32" className="size-8 shrink-0">
    <rect width="32" height="32" rx="5" fill="#1f94ee" />
    <path
      d="M16 11V27M5 16h17M16 11c0-8 7-7 7-2M22 16c8 0 7 7 2 7M16 22c0 8-7 7-7 2M9 16c-6 0-7-6-3-7"
      stroke="#e4f6ff"
      strokeWidth="2.200"
      fill="none"
    />
  </svg>
);

const Swirl = ({ className }) => (
  <svg viewBox="0 0 32 32" className={className}>
    <path d="M27 5C16-2 2 5 3 18c1 12 16 16 22 7 2-3 3-7 2-11l-10 3 4 2c-1 5-9 6-11 0C8 11 17 3 27 5z" fill="#1f9ce8" stroke="#0f6cb8" />
  </svg>
);

const Task = ({ icon, text, className, last, active }) => (
  <button
    className={
      "flex h-full items-center gap-1 overflow-hidden whitespace-nowrap text-left text-white " +
      (last ? "" : "border-r border-white/30 ") +
      (active ? "bg-white/35 " : "") +
      className
    }
  >
    {icon}
    {text}
  </button>
);

const TaskGroup = ({ children, className = "" }) => (
  <div
    className={
      "flex h-[38px] shrink-0 overflow-hidden rounded-[3px] border border-white/60 bg-[linear-gradient(165deg,#ffffff80_0%,#ffffff40_35%,#ffffff18_50%,#ffffff20_100%)] pb-px shadow-[0_0_0_1px_#10304f] " +
      className
    }
  >
    {children}
  </div>
);

const Taskbar = () => (
  <footer className="flex h-[39px] shrink-0 items-center border-t border-[#10243a] bg-[linear-gradient(90deg,#1f6290_0px,#2a86a8_230px,#2479a2_420px,#22709c_700px,#2467a0_1000px,#1f5590_1300px,#174478_1600px,#123a68_1920px)] text-white">
    <button aria-label="开始" className="ml-2">
      <svg viewBox="0 0 36 36" className="size-9">
        <circle cx="18" cy="18" r="17" fill="#2c5f86" stroke="#a8cce0" />
        <path d="M3 14C8 2 28 2 33 14c-8 4-22 4-30 0z" fill="#8fb4cc" opacity=".6" />
        <path d="M9 11c3-2 5-2 8 0l-1 7c-3-2-5-2-8 0z" fill="#f0602c" />
        <path d="M18 11c3 2 6 2 9 0l-1 7c-3 2-6 2-9 0z" fill="#8cc63c" />
        <path d="M8 19c3-2 5-2 8 0l-1 7c-3-2-5-2-8 0z" fill="#3c9ce8" />
        <path d="M17 19c3 2 6 2 9 0l-1 7c-3 2-6 2-9 0z" fill="#fcc82c" />
      </svg>
    </button>
    <button aria-label="浏览器" className="ml-[22px] flex w-[42px]">
      <Swirl className="size-8 shrink-0" />
      <svg viewBox="0 0 16 18" className="-ml-2 h-[18px] w-4 shrink-0">
        <path d="M8 1c4 0 5 3 5 7l2 5H1l2-5c0-4 1-7 5-7zM6 14h4l-2 3z" fill="#f4b41c" />
      </svg>
    </button>
    <button aria-label="显示桌面" className="ml-[23px]">
      <svg width="31" height="24">
        <path d="M1 1h29v22H1z" fill="#3a74dc" stroke="#c8ccd0" strokeWidth="2" />
        <path d="M2 2h27L2 16z" fill="#7ca4ee" />
        <path d="M2 19h27v3H2z" fill="#223" />
        <circle cx="5" cy="20" r="2" fill="#4fc0f0" />
      </svg>
    </button>
    <button aria-label="切换窗口" className="ml-7">
      <svg width="31" height="24">
        <path d="M1 1h29v22H1z" fill="#23384c" stroke="#a8b0b8" strokeWidth="2" />
        <path d="M4 4h10v10H4zM9 6h10v11H9zM15 8h11v11H15z" fill="#e4f0f0" stroke="#4f9a90" />
      </svg>
    </button>
    <TaskGroup className="ml-4">
      <Task last icon={<ChromeIcon />} text="为什么我的..." className="w-[126px] pl-2" />
    </TaskGroup>
    <button aria-label="百度网盘" className="mr-4 ml-[15px]">
      <svg width="32" height="32">
        <rect width="32" height="32" rx="6" fill="#fff" />
        <g fill="none" strokeWidth="3">
          <circle cx="16" cy="11" r="5" stroke="#2c70e8" />
          <circle cx="10" cy="18" r="4.500" stroke="#2c70e8" />
          <circle cx="22" cy="18" r="4.500" stroke="#2c70e8" />
        </g>
        <circle cx="13" cy="16" r="3" fill="#e8404c" />
        <path d="M11 30h5v2h-5z" fill="#e03030" />
        <path d="M16 30h6v2h-6z" fill="#2c70e8" />
      </svg>
    </button>
    <TaskGroup>
      <Task icon={<FolderBig />} text="签证单" className="w-[127px] gap-[10px] pl-2" />
      <Task last icon={<FolderBig />} text="塔吊基础签..." className="w-[127px] gap-[10px] pl-[10px]" />
    </TaskGroup>
    <TaskGroup className="ml-1">
      <Task last icon={<WeChat className="h-7 w-8 shrink-0" />} text="微信" className="w-[125px] pl-2" />
    </TaskGroup>
    <TaskGroup className="ml-1">
      <Task icon={<PhotoIcon />} text="二层板 - Wi..." className="w-[127px] pl-2" />
      <Task last icon={<PhotoIcon />} text="屋面板 - Wi..." className="w-[127px] pl-[10px]" />
    </TaskGroup>
    <TaskGroup className="ml-1">
      <Task icon={<AcadIcon />} text="报告厅结施_..." className="w-[127px] pl-[6px]" />
      <Task icon={<AcadIcon />} text="报告厅施工..." className="w-[128px] pl-2" />
      <Task last icon={<AcadIcon />} text="保安镇小学..." className="w-[128px] pl-[10px]" />
    </TaskGroup>
    <TaskGroup className="ml-1">
      <Task last active icon={<GlodonIcon />} text="广联达—钢..." className="w-[125px] pl-[6px]" />
    </TaskGroup>
    <div className="ml-auto flex shrink-0 items-center">
      <svg width="15" height="16" className="mr-4">
        <path d="M.500 6.500h14v8H.500z" fill="#d4dce4" stroke="#667" />
        <path d="M2 9h11M2 11h11M4 13h7" stroke="#556" strokeDasharray="1 1" />
        <path d="M7 6c0-4 4-1 5-5" stroke="#d4dce4" fill="none" />
      </svg>
      <div className="flex gap-2">
        <svg width="16" height="16">
          <rect width="16" height="16" rx="2" fill="#fff" />
          <path d="M4 12a2.500 2.500 0 010-5 4 4 0 018-1 3 3 0 010 6H6l4-4" fill="none" stroke="#2c70e8" strokeWidth="1.500" />
        </svg>
        <WeChat className="size-4" />
        <Swirl className="size-4" />
        <svg width="16" height="16">
          <circle cx="8" cy="8" r="8" fill="#f8d020" />
          <path d="M1 5a8 8 0 0112-3L8 6z" fill="#48b030" />
          <path d="M8 4v8M4 8h8" stroke="#0f6a1c" strokeWidth="2.500" />
        </svg>
        <svg width="16" height="16">
          <rect width="14" height="14" rx="2" fill="#2ca0f0" />
          <path d="M7 2v9M3 4l8 5M11 4L3 9" stroke="#fff" strokeWidth="1.500" />
          <circle cx="12" cy="12" r="4" fill="#f49030" />
          <path d="M10 11h4M10 13h4" stroke="#fff" />
        </svg>
        <svg width="16" height="16">
          <path d="M2 1v14" stroke="#fff" strokeWidth="1.500" />
          <path d="M3 2h8v7H3z" fill="#fff" />
          <circle cx="11" cy="11" r="4.500" fill="#e03020" />
          <path d="M9 9l4 4M13 9l-4 4" stroke="#fff" strokeWidth="1.500" />
        </svg>
        <svg width="16" height="16">
          <path d="M1 12h2v2H1zM4 10h2v4H4zM7 8h2v6H7zM10 5h2v9h-2zM13 2h2v12h-2z" fill="#fff" />
        </svg>
        <svg width="16" height="16">
          <path d="M1 5h3l4-4v14l-4-4H1z" fill="#fff" />
          <path d="M10 5c1 2 1 4 0 6M12 3c2 3 2 7 0 10" fill="none" stroke="#fff" />
        </svg>
      </div>
      <time className="w-[84px] pl-1 text-center leading-[18px]">
        15:48
        <br />
        2018/11/26
      </time>
      <button aria-label="桌面" className="h-[38px] w-[14px] border border-[#4f7098] bg-gradient-to-b from-[#5f7fa8] to-[#16365c]" />
    </div>
  </footer>
);

export default function App() {
  return (
    <div className="flex h-screen flex-col overflow-hidden bg-[#f0f0f0] font-['Open_Sans','Noto_Sans_CJK_SC',sans-serif] text-xs leading-4 text-black">
      <TitleBar />
      <nav className="flex h-[27px] shrink-0 items-center border-b border-[#a0a0a0] pt-[2px]">
        <Handle />
        <div className="flex items-center gap-[11px] pl-[6px]">
          {menus.map((m) => (
            <button key={m} className="whitespace-nowrap">
              {m}
            </button>
          ))}
          <svg width="16" height="16">
            <path d="M3 8h10v4c-1 4-9 4-10 0z" fill="#f0c090" stroke="#6a4020" strokeWidth=".6" />
            <path d="M1 8c0-9 14-9 14 0l-3-1-8 0z" fill="#f8d030" stroke="#a87c10" strokeWidth=".7" />
            <path d="M3 8h10v2H3zM6 11v1M10 11v1" fill="#3a2010" stroke="#3a2010" />
            <circle cx="6" cy="5" r="1" fill="#3080d0" />
          </svg>
        </div>
      </nav>
      <div className="flex h-[29px] shrink-0">
        <Group>{tools(fileTools)}</Group>
        <Group>{tools(rebarTools)}</Group>
        <Group>
          <Combo icon="plane" label="视图模式" value="二维" className="mr-[2px] ml-[3px] w-[59px]" />
          {tools(viewTools)}
        </Group>
      </div>

      <main className="flex min-h-0 flex-1">
        {/* module navigation */}
        <aside className="flex w-[166px] shrink-0 flex-col pt-[2px] pb-[2px]">
          <PanelTitle text="模块导航栏" />
          <div className="mt-[3px] flex min-h-0 flex-1 flex-col pl-[2px]">
            <NavButton>工程设置</NavButton>
            <NavButton>绘图输入</NavButton>
            <div className="flex h-[27px] shrink-0 items-center gap-2 border border-[#a0a0a0] pl-[5px]">
              <button aria-label="全部展开">
                <svg width="16" height="16">
                  <path d="M4 1v8M0 5h8M12 7v8M8 11h8" stroke="#000" strokeWidth="3.500" />
                  <path d="M4 2v6M1 5h6M12 8v6M9 11h6" stroke="#2fb0a0" strokeWidth="1.500" />
                </svg>
              </button>
              <button aria-label="全部折叠">
                <svg width="16" height="16">
                  <path d="M0 4h8M7 11h9" stroke="#000" strokeWidth="3.500" />
                  <path d="M1 4h6M8 11h7" stroke="#2fb0a0" strokeWidth="1.500" />
                </svg>
              </button>
            </div>
            <NavTree />
            <NavButton>单构件输入</NavButton>
            <NavButton>报表预览</NavButton>
          </div>
        </aside>

        {/* component list */}
        <aside className="mr-[2px] flex w-[166px] shrink-0 flex-col pt-[2px] pr-px pb-[2px] pl-px">
          <PanelTitle text="构件列表" active />
          <div className="flex h-7 shrink-0 items-center border-b border-[#a0a0a0] pt-px">
            {tools([
              ["newComp", "新建", { arrow: "tight" }],
              ["delG", "", { off: true, label: "删除" }],
              ["copyG", "", { off: true, label: "复制" }],
            ])}
          </div>
          <div className="flex h-[25px] shrink-0 items-center">
            <input
              aria-label="搜索构件"
              placeholder="搜索构件..."
              className="h-[23px] w-[138px] rounded-sm border border-[#d4d4d4] bg-white px-[2px] placeholder:text-[#777]"
            />
            <button aria-label="搜索" className="ml-[5px]">
              <Icon name="lensBlue" />
            </button>
          </div>
          <div className="flex-1 border border-[#828790] bg-white pt-[3px] pl-3">
            <div className="flex h-4 items-center">
              <span className="w-[9px] border-t border-dotted border-[#808080]" />
              <span className="flex items-center gap-1 bg-[#316ac5] pr-1 pl-[2px]">
                <Icon name="custLine" />
                自定义线
              </span>
            </div>
          </div>
        </aside>

        <section className="flex min-w-0 flex-1 flex-col">
          <div className="flex h-7 shrink-0">
            <Group>{tools(editTools)}</Group>
          </div>
          <div className="flex h-[29px] shrink-0">
            <Group>
              <div className="ml-[2px] flex gap-1">
                <Combo label="楼层" value="坡屋面" className="w-[57px]" />
                <Combo label="类别" value="自定义" className="w-[67px]" />
                <Combo label="类型" value="自定义线" className="w-[68px]" />
                <Combo label="构件" value="" className="w-[66px]" />
              </div>
              <span className="w-[3px]" />
              <Sep />
              {tools(compTools)}
            </Group>
            <Group>{tools(axisTools)}</Group>
          </div>
          <div className="flex h-[29px] shrink-0">
            <Group>
              {tools(drawTools)}
              <Combo off label="画弧方式" value="" className="mr-[2px] ml-[3px] w-[53px]" />
              {tools([
                ["rectG", "矩形", off],
                "|",
                ["smartG", "智能布置", { off: true, arrow: "tight" }],
              ])}
            </Group>
          </div>
          <div className="relative min-h-0 flex-1 overflow-hidden bg-black">
            <ModelView />
            <PolygonDialog />
          </div>
          <div className="mb-[2px] flex h-[29px] shrink-0">
            <Group>
              {tools([
                ["ortho", "正交"],
                ["snap", "对象捕捉", { on: true }],
                ["dyn", "动态输入", { on: true }],
              ])}
            </Group>
            <Group>{tools(snapTools)}</Group>
            <Group>
              <Combo label="偏移方式" value="不偏移" className="ml-[2px] w-[56px]" />
              <Sep />
              <span className="w-[24px] text-[13px] text-[#a0a0a0]">X=</span>
              <Spin label="X偏移" value="0" className="w-[56px]" />
              <span className="w-[28px] pl-[2px] text-[13px] text-[#a0a0a0]">mm</span>
              <span className="w-[19px] text-[13px] text-[#a0a0a0]">Y=</span>
              <Spin label="Y偏移" value="0" className="w-[56px]" />
              <span className="w-[25px] pl-[2px] text-[13px] text-[#a0a0a0]">mm</span>
              <Sep />
              <label className="flex items-center gap-2 px-[2px]">
                <input
                  type="checkbox"
                  className="size-[11px] appearance-none border border-[#8e8f8f] bg-white"
                />
                旋转
              </label>
              <Spin label="旋转角度" value="0.000" className="ml-1 w-[66px]" />
              <span className="w-[9px] pl-[3px] text-[#808080]">°</span>
            </Group>
          </div>
        </section>

        <div className="w-[2px] shrink-0" />
        <PropertyPanel />
      </main>

      <div className="flex h-[22px] shrink-0 gap-[3px] pt-px leading-[18px] whitespace-nowrap *:border-t *:border-l *:border-[#a0a0a0] *:pl-px">
        <span className="w-[147px]"><Song>X=-11824 Y=19039</Song></span>
        <span className="w-[77px]"><Song>层高:3m</Song></span>
        <span className="w-[97px]"><Song>底标高:15.37m</Song></span>
        <span className="w-[47px]"><Song>0</Song></span>
        <span className="flex-1">按鼠标左键指定第一个角点，或拾取构件图元</span>
        <span className="w-[70px]"><Song>900 FPS</Song></span>
      </div>
      <Taskbar />
      <NetWidget />
    </div>
  );
}
